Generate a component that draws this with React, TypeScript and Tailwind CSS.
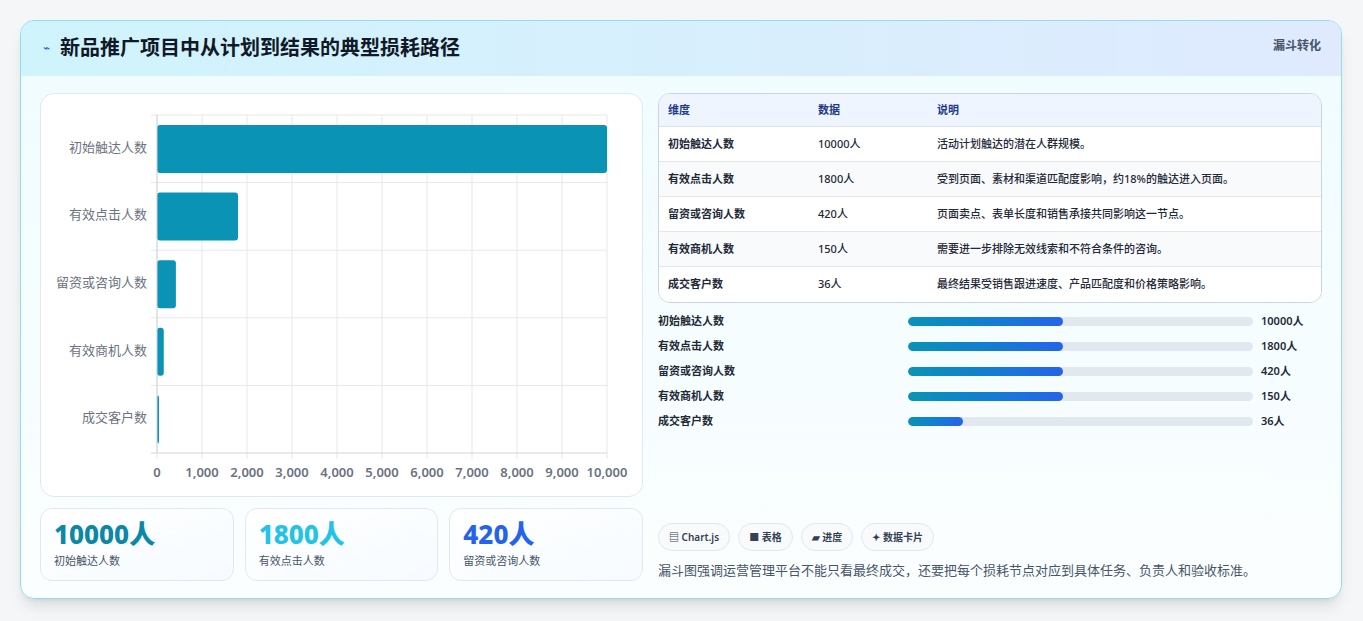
import React from "react";

const FONT = { fontFamily: '"Noto Sans","Noto Sans CJK SC",sans-serif' };

const rows = [
  { name: "初始触达人数", v: 10000, desc: "活动计划触达的潜在人群规模。", pct: 45 },
  { name: "有效点击人数", v: 1800, desc: "受到页面、素材和渠道匹配度影响，约18%的触达进入页面。", pct: 45 },
  { name: "留资或咨询人数", v: 420, desc: "页面卖点、表单长度和销售承接共同影响这一节点。", pct: 45 },
  { name: "有效商机人数", v: 150, desc: "需要进一步排除无效线索和不符合条件的咨询。", pct: 45 },
  { name: "成交客户数", v: 36, desc: "最终结果受销售跟进速度、产品匹配度和价格策略影响。", pct: 16 },
];

function BarChart() {
  const x0 = 116, x1 = 566, y0 = 21, y1 = 359;
  const band = (y1 - y0) / 5;
  const ticks = Array.from({ length: 11 }, (_, i) => i * 1000);
  return (
    <svg width="600" height="400" className="block">
      {ticks.map((t, i) => {
        const x = x0 + (i * (x1 - x0)) / 10;
        return (
          <g key={t}>
            <line x1={x} y1={y0} x2={x} y2={y1 + 6} stroke="#e5e7eb" />
            <text x={x} y={y1 + 24} fontSize="13" fill="#6b7280" textAnchor="middle" fontWeight="600">
              {t.toLocaleString("en-US")}
            </text>
          </g>
        );
      })}
      {rows.map((r, i) => {
        const yt = y0 + band * i;
        const w = Math.max(2, (r.v / 10000) * (x1 - x0));
        return (
          <g key={r.name}>
            <line x1={x0 - 6} y1={yt} x2={x1} y2={yt} stroke="#e5e7eb" />
            <rect x={x0} y={yt + 10} width={w} height={48} rx="3" fill="#0b93b5" />
            <text x={x0 - 10} y={yt + band / 2 + 3} fontSize="13" fill="#6b7280" textAnchor="end">
              {r.name}
            </text>
          </g>
        );
      })}
      <line x1={x0 - 6} y1={y1} x2={x1} y2={y1} stroke="#d1d5db" />
      <line x1={x0} y1={y0} x2={x0} y2={y1} stroke="#d1d5db" />
    </svg>
  );
}

export default function App() {
  return (
    <div className="w-[1363px] h-[621px] bg-[#f5f6f8] pt-5 pl-5" style={FONT}>
      <div className="w-[1322px] h-[579px] rounded-[14px] border border-[#8fe0ec] bg-gradient-to-b from-[#effcff] to-[#fbfeff] overflow-hidden shadow-lg flex flex-col">
        <div className="h-[55px] flex items-center justify-between px-5 bg-gradient-to-r from-[#cff4fc] to-[#dfeafe] border-b border-[#d6f0f7]">
          <div className="flex items-center gap-[10px]">
            <span className="text-[#2563eb] text-[12px] ml-[2px]">⌁</span>
            <h1 className="text-[20px] font-bold text-[#111827]">新品推广项目中从计划到结果的典型损耗路径</h1>
          </div>
          <span className="text-[12px] font-semibold text-[#475569] self-start mt-4">漏斗转化</span>
        </div>
        <div className="flex gap-[15px] px-[19px] pt-[17px]">
          <div className="w-[603px] flex flex-col gap-[11px]">
            <div className="h-[404px] rounded-[14px] border border-[#e2e8f0] bg-white">
              <BarChart />
            </div>
            <div className="grid grid-cols-3 gap-[11px]">
              {[
                ["10000人", "初始触达人数", "text-[#0b87a8]"],
                ["1800人", "有效点击人数", "text-[#22c3e6]"],
                ["420人", "留资或咨询人数", "text-[#2563eb]"],
              ].map(([v, l, c]) => (
                <div key={l} className="h-[73px] rounded-[12px] border border-[#e2e8f0] bg-gradient-to-br from-white to-[#f6fbff] px-[13px] pt-[10px]">
                  <div className={`text-[26px] font-extrabold leading-[30px] ${c}`}>{v}</div>
                  <div className="text-[11px] text-[#475569] mt-1">{l}</div>
                </div>
              ))}
            </div>
          </div>
          <div className="flex-1 flex flex-col">
            <div className="rounded-[12px] border border-[#cbd5e1] overflow-hidden bg-white text-[11px] font-medium text-[#1f2937]">
              <div className="flex h-[33px] items-center bg-[#eef5fe] font-semibold text-[#1e3a8a] border-b border-[#dbe3ee]">
                <div className="w-[159px] pl-[9px]">维度</div>
                <div className="w-[119px]">数据</div>
                <div>说明</div>
              </div>
              {rows.map((r, i) => (
                <div key={r.name} className={`flex h-[35px] items-center border-b border-[#e5e7eb] last:border-b-0 ${i % 2 ? "bg-[#f8fafc]" : "bg-white"}`}>
                  <div className="w-[159px] pl-[9px] font-semibold">{r.name}</div>
                  <div className="w-[119px]">{r.v}人</div>
                  <div>{r.desc}</div>
                </div>
              ))}
            </div>
            <div className="flex flex-col gap-[7px] mt-[9px]">
              {rows.map((r) => (
                <div key={r.name} className="flex items-center h-[18px] text-[11px] font-semibold text-[#1f2937]">
                  <div className="w-[250px]">{r.name}</div>
                  <div className="w-[345px] h-[9px] rounded-full bg-[#e2e8f0] overflow-hidden">
                    <div className="h-full rounded-full bg-gradient-to-r from-[#0b93b5] to-[#2563eb]" style={{ width: `${r.pct}%` }} />
                  </div>
                  <div className="ml-[8px]">{r.v}人</div>
                </div>
              ))}
            </div>
            <div className="flex gap-[8px] mt-[93px]">
              {["▤ Chart.js", "■ 表格", "▰ 进度", "✦ 数据卡片"].map((t) => (
                <span key={t} className="h-[28px] px-[10px] flex items-center rounded-full border border-[#e2e8f0] bg-[#f8fafc] text-[10px] font-semibold text-[#334155]">{t}</span>
              ))}
            </div>
            <p className="mt-[10px] text-[13px] text-[#475569]">漏斗图强调运营管理平台不能只看最终成交，还要把每个损耗节点对应到具体任务、负责人和验收标准。</p>
          </div>
        </div>
      </div>
    </div>
  );
}
